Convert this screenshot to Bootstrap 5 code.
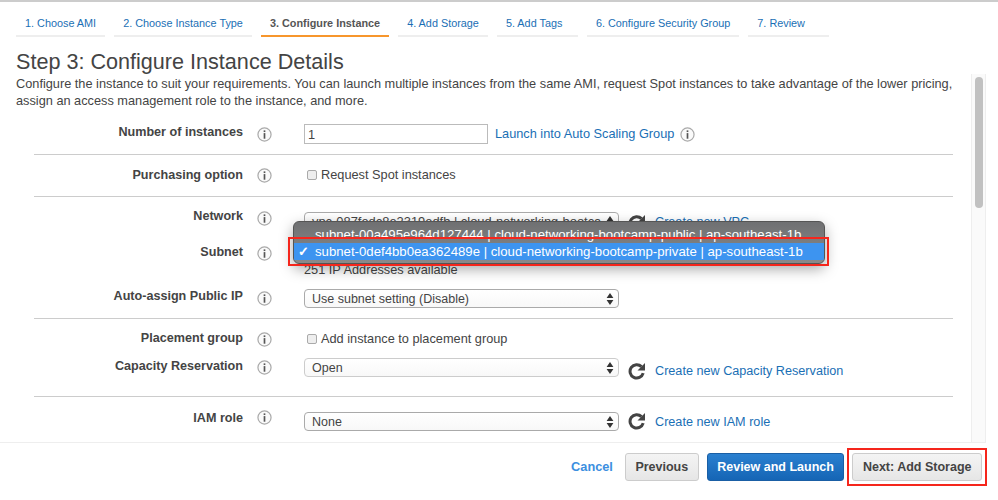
<!DOCTYPE html>
<html lang="en"><head><meta charset="utf-8"><title>Step 3</title>
<link href="https://cdn.jsdelivr.net/npm/bootstrap@5.3.0/dist/css/bootstrap.min.css" rel="stylesheet">
<style>
html,body{height:500px;overflow:hidden}
body{font-family:"Liberation Sans",Arial,sans-serif;color:#444;background:#fff;border-top:2px solid #ccc;font-size:12.75px}
.wiz{padding:15px 16px 0;gap:9px;height:36px}
.wiz a{display:block;height:20px;min-width:81px;line-height:12px;font-size:10.85px;color:#1a6fb5;text-decoration:none;border-bottom:2px solid #eee;padding:0 9px}
.wiz a.cur{color:#555;font-weight:700;border-bottom-color:#f7962c}
.ttl{font-size:21.6px;line-height:25px;color:#444;font-weight:400;margin:11px 0 0 16px}
.pane{height:369px;position:relative;overflow:hidden;border-bottom:1px solid #eee;margin-right:12px}
.intro{margin:0 0 0 16px;width:940px;line-height:17px;padding:1px 0;color:#444}
.bar{position:absolute;right:0;top:0;bottom:0;width:15px;background:#fafafa;border-left:1px solid #eee;border-right:1px solid #eee}
.thumb{margin:3px 0 0 3px;height:131px;width:8px;background:#c1c1c1;border-radius:4px}
.sect{margin-left:34px;width:919px;border-bottom:1px solid #ccc}
.fr{display:flex;align-items:center}
.lbl{width:209px;text-align:right;font-weight:700;color:#444;flex:none;line-height:15px;font-size:12.6px}
.lbl.up{padding-bottom:3px}
.lbl.up1{padding-bottom:2px}
.lbl.dn{padding-top:2px}
.inf{width:42px;flex:none;display:flex;justify-content:center}
.inf svg,.rt svg{display:block}
.ctl{display:flex;align-items:center;margin-left:19px}
.ctl.nudge{padding-bottom:2px}
.tinput{width:184px;height:20px;border:1px solid #bbb;padding:0 3px;line-height:19px;color:#444;background:#fff}
.sel{width:315px;height:19px;border:1px solid #aaa;border-radius:4px;padding:0 7px;line-height:18px;position:relative;background:linear-gradient(#fff,#f8f8f8);color:#444;white-space:nowrap;overflow:hidden;font-size:12.5px}
.sel.lite{border-color:#ccc}
.sel.wide{font-size:12.9px}
.sel svg{position:absolute;right:4px;top:2px}
.lnk{color:#1a6fb5;text-decoration:none;white-space:nowrap}
.lnk.narrow{font-size:12.65px}
.lnk.drop2{margin-top:2px}
.lnk.drop8{margin-top:8px}
.lnk-gap{margin-left:7px}
.ic-gap{margin-left:6px}
.cb{width:10px;height:10px;border:1px solid #aaa;background:#eee;border-radius:2px;margin:0 4px 0 3px;flex:none}
.rt{margin:4px 9px 0 9px}
.rt.r7{margin-top:7px}
.rt.r0{margin-top:0}
.low6{margin-top:6px}
.low8{margin-top:8px}
.pop{position:absolute;left:293px;top:147px;width:532px;height:43px;border-radius:6px;background:linear-gradient(#6f7072,#8a8a8a);border:1px solid #555;box-shadow:0 5px 14px rgba(0,0,0,.35);color:#fff;overflow:hidden;font-size:13.2px}
.optA{height:19px;margin-top:2px;padding-left:21px;line-height:22px;white-space:nowrap;overflow:hidden}
.optB{height:17px;background:#3d94f0;padding-left:21px;line-height:17px;white-space:nowrap;position:relative}
.optB span{position:absolute;left:4px;top:0;font-weight:700}
.redbox{position:absolute;border:2px solid #f5261c;pointer-events:none}
.rb-sub{left:288px;top:163px;width:541px;height:29px}
.rb-next{left:847px;top:5px;width:140px;height:38px}
.foot{height:48px;padding-right:16px;position:relative}
.bbtn{height:28px;padding:0 9.5px;border-radius:3px;font-weight:700;font-size:12.5px;line-height:26px;border:1px solid #ccc;background:linear-gradient(#f4f4f4,#e6e6e6);color:#444}
.bbtn.pri{background:linear-gradient(#2a80d0,#1565b5);border-color:#1a5fa5;color:#fff}
.cancel{color:#3c8fe0;font-weight:700;text-decoration:none;margin-right:4px}
.h45{height:45px;padding-top:13px}.h42{height:42px;padding-top:10px}.h122{height:122px;padding-top:11px}.h78{height:78px;padding-top:10px}.hlast{padding-top:10px}
.r20{height:20px}.r22{height:22px}.r16{height:16px}.t8{margin-top:8px}.t9{margin-top:9px}.t15{margin-top:15px}
</style></head><body>
<svg width="0" height="0" class="position-absolute"><defs>
<symbol id="i" viewBox="0 0 16 16"><circle cx="8" cy="8" r="7" fill="#fafafa" stroke="#aaa" stroke-width="1.3"/><rect x="7.1" y="6.5" width="1.8" height="6" fill="#555"/><rect x="7.1" y="3.6" width="1.8" height="1.8" fill="#555"/></symbol>
<symbol id="r" viewBox="0 0 18 18"><path d="M15.2 11.2a6.7 6.7 0 1 1-1.7-6.6" fill="none" stroke="#444" stroke-width="3"/><path d="M17 1v7.5H9.5z" fill="#444"/></symbol>
<symbol id="a" viewBox="0 0 8 14"><path d="M4 1l3.4 5H.6zM4 13L.6 8h6.8z" fill="#333"/></symbol>
</defs></svg>
<nav class="wiz d-flex">
<a href="#">1. Choose AMI</a><a href="#">2. Choose Instance Type</a><a href="#" class="cur">3. Configure Instance</a><a href="#">4. Add Storage</a><a href="#">5. Add Tags</a><a href="#">6. Configure Security Group</a><a href="#">7. Review</a>
</nav>
<h1 class="ttl">Step 3: Configure Instance Details</h1>
<div class="pane">
<p class="intro">Configure the instance to suit your requirements. You can launch multiple instances from the same AMI, request Spot instances to take advantage of the lower pricing, assign an access management role to the instance, and more.</p>
<div class="sect h45">
<div class="fr r22"><div class="lbl up">Number of instances</div><div class="inf"><svg width="15" height="15"><use href="#i"/></svg></div><div class="ctl"><div class="tinput">1</div><a class="lnk lnk-gap" href="#">Launch into Auto Scaling Group</a><svg class="ic-gap" width="15" height="15"><use href="#i"/></svg></div></div>
</div>
<div class="sect h42">
<div class="fr r20"><div class="lbl">Purchasing option</div><div class="inf"><svg width="15" height="15"><use href="#i"/></svg></div><div class="ctl"><span class="cb"></span>Request Spot instances</div></div>
</div>
<div class="sect h122">
<div class="fr r20"><div class="lbl up">Network</div><div class="inf"><svg width="15" height="15"><use href="#i"/></svg></div><div class="ctl low6"><div class="sel wide">vpc-087fedc8e2319edfb | cloud-networking-bootca<svg width="8" height="14"><use href="#a"/></svg></div><span class="rt"><svg width="18" height="18"><use href="#r"/></svg></span><a class="lnk narrow drop2" href="#">Create new VPC</a></div></div>
<div class="fr r20 t15"><div class="lbl up1">Subnet</div><div class="inf"><svg width="15" height="15"><use href="#i"/></svg></div><div class="ctl"></div></div>
<div class="fr r16"><div class="lbl"></div><div class="inf"></div><div class="ctl nudge">251 IP Addresses available</div></div>
<div class="fr r20 t9"><div class="lbl up">Auto-assign Public IP</div><div class="inf"><svg width="15" height="15"><use href="#i"/></svg></div><div class="ctl"><div class="sel">Use subnet setting (Disable)<svg width="8" height="14"><use href="#a"/></svg></div></div></div>
</div>
<div class="sect h78">
<div class="fr r20"><div class="lbl up1">Placement group</div><div class="inf"><svg width="15" height="15"><use href="#i"/></svg></div><div class="ctl"><span class="cb"></span>Add instance to placement group</div></div>
<div class="fr r20 t8"><div class="lbl up1">Capacity Reservation</div><div class="inf"><svg width="15" height="15"><use href="#i"/></svg></div><div class="ctl"><div class="sel lite">Open<svg width="8" height="14"><use href="#a"/></svg></div><span class="rt r7"><svg width="18" height="18"><use href="#r"/></svg></span><a class="lnk narrow drop8" href="#">Create new Capacity Reservation</a></div></div>
</div>
<div class="sect border-0 hlast">
<div class="fr r20"><div class="lbl dn">IAM role</div><div class="inf"><svg width="15" height="15"><use href="#i"/></svg></div><div class="ctl low8"><div class="sel">None<svg width="8" height="14"><use href="#a"/></svg></div><span class="rt r0"><svg width="18" height="18"><use href="#r"/></svg></span><a class="lnk narrow drop2" href="#">Create new IAM role</a></div></div>
</div>
<div class="bar"><div class="thumb"></div></div>
<div class="pop"><div class="optA">subnet-00a495e964d127444 | cloud-networking-bootcamp-public | ap-southeast-1b</div><div class="optB"><span>✓</span>subnet-0def4bb0ea362489e | cloud-networking-bootcamp-private | ap-southeast-1b</div></div>
<div class="redbox rb-sub"></div>
</div>
<div class="foot d-flex align-items-center justify-content-end gap-2">
<a class="cancel" href="#">Cancel</a>
<button class="btn bbtn" type="button">Previous</button>
<button class="btn bbtn pri" type="button">Review and Launch</button>
<button class="btn bbtn" type="button">Next: Add Storage</button>
<div class="redbox rb-next"></div>
</div>
</body></html>
